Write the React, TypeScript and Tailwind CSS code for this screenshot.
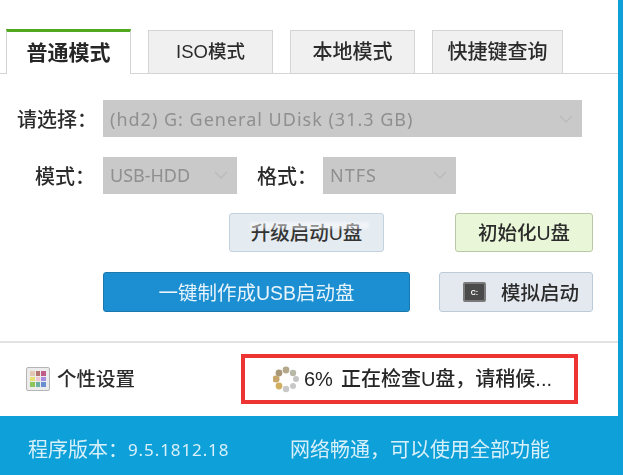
const cjk = "font-['Liberation_Sans','Noto_Sans_CJK_SC',sans-serif]";

function Chevron({ className }: { className: string }) {
  return (
    <svg width="16" height="10" viewBox="0 0 16 10" fill="none" className={className}>
      <path d="M2 2l6 6 6-6" stroke="#bababa" strokeWidth="1.3" />
    </svg>
  );
}

function Tab({ label, width, active, size = "text-[20px]" }: { label: string; width: string; active?: boolean; size?: string }) {
  if (active) {
    return (
      <div className={`${width} h-[45px] -mb-px flex items-center justify-center border-x border-[#d4d4d4] border-t-[3px] border-t-[#4fa81e] bg-white text-[21px] font-bold text-[#262626]`}>
        {label}
      </div>
    );
  }
  return (
    <div className={`${width} ${size} h-[43px] flex items-center justify-center border border-b-0 border-[#d4d4d4] bg-[#f0f0f0] font-medium text-[#2b2b2b]`}>
      {label}
    </div>
  );
}

function Select({ value, width, spacing = "" }: { value: string; width: string; spacing?: string }) {
  return (
    <div className={`${width} ${spacing} h-[37px] flex items-center justify-between pl-[7px] pr-2 bg-[#c9c9c9] font-['Noto_Sans',sans-serif] text-[18px] text-[#8f8f8f]`}>
      <span className="pt-[1px]">{value}</span>
      <Chevron className="shrink-0" />
    </div>
  );
}

function GridIcon() {
  const colors = ["#e3c6b4", "#b5766f", "#c05a88", "#e8e070", "#f0c8d0", "#a78be0", "#8cc65a", "#6bb0a0", "#6a8fd0"];
  return (
    <div className="w-6 h-6 grid grid-cols-3 gap-px p-[3px] rounded-[2px] border border-[#b5b5b5] bg-[#ececec]">
      {colors.map((c, i) => (
        <span key={i} style={{ backgroundColor: c }} />
      ))}
    </div>
  );
}

function Spinner() {
  const dots = [
    [13, 4, "#b3a98a", 3.4], [20, 7, "#b8b8a8", 3.2], [23, 13, "#c4c4c4", 3], [20, 20, "#c8c8c8", 3],
    [13, 23, "#c8c8c8", 3.2], [6, 20, "#d0b060", 3.4], [3, 13, "#c8a868", 3.6], [6, 7, "#a89878", 3.4],
  ] as const;
  return (
    <svg width="26" height="27" viewBox="0 0 26 27" className="shrink-0">
      {dots.map(([x, y, c, r], i) => (
        <circle key={i} cx={x} cy={y} r={r} fill={c} />
      ))}
    </svg>
  );
}

function CmdIcon() {
  return (
    <div className="w-[23px] h-[20px] flex items-center justify-center rounded-[2px] bg-[#4a4a4a] border-2 border-[#7a7a7a]">
      <span className="text-[7px] leading-none font-bold text-white">C:</span>
    </div>
  );
}

export default function App() {
  return (
    <div className={`${cjk} w-[628px] h-[475px] bg-white overflow-hidden`}>
      <div className="w-[623px] h-[475px] flex flex-col border-r-[5px] border-[#0ea0d8] blur-[0.6px]">
        <div className="pt-[29px] pl-[6px] flex items-end gap-[17px] border-b border-[#d4d4d4] h-[74px]">
          <Tab label="普通模式" width="w-[125px]" active />
          <Tab label="ISO模式" width="w-[125px]" size="text-[18.5px]" />
          <Tab label="本地模式" width="w-[125px]" />
          <Tab label="快捷键查询" width="w-[131px]" />
        </div>

        <div className="flex items-center mt-[26px] h-[37px]">
          <span className="w-[103px] pl-[17px] pt-[3px] text-[20px] font-medium text-[#2b2b2b]">请选择：</span>
          <Select value="(hd2) G: General UDisk (31.3 GB)" width="w-[479px]" spacing="tracking-[1px]" />
        </div>

        <div className="flex items-center mt-[20px] h-[36px]">
          <span className="w-[103px] pl-[35px] pt-[3px] text-[20px] font-medium text-[#2b2b2b]">模式：</span>
          <Select value="USB-HDD" width="w-[134px]" />
          <span className="w-[86px] pl-[20px] pt-[3px] text-[20px] font-medium text-[#2b2b2b]">格式：</span>
          <Select value="NTFS" width="w-[133px]" spacing="tracking-[1px]" />
        </div>

        <div className="flex mt-[20px] h-[39px] pl-[229px]">
          <div className="relative w-[155px] flex items-center justify-center pt-[3px] rounded-[3px] border border-[#c3d2de] bg-[#e4ebf1] text-[19.5px] font-medium text-[#333]">
            升级启动U盘
            <div aria-hidden="true" className="absolute left-[20px] right-[14px] top-[8px] h-[7px] bg-white/45 blur-[1px]" />
          </div>
          <div className="ml-[71px] w-[138px] flex items-center justify-center pt-[3px] rounded-[3px] border border-[#b6c9a4] bg-[#e9f6d8] text-[19.5px] font-medium text-[#2b2b2b]">
            初始化U盘
          </div>
        </div>

        <div className="flex mt-[20px] h-[40px] pl-[103px]">
          <div className="w-[307px] flex items-center justify-center pt-[3px] rounded-[3px] border border-[#1a78ad] bg-[#1b8fd2] text-[19.5px] text-[#e8f4fb]">
            一键制作成USB启动盘
          </div>
          <div className="ml-[29px] w-[154px] flex items-center pl-[23px] gap-[15px] rounded-[3px] border border-[#bccbd9] bg-[#e3e9ef] text-[19.5px] font-medium text-[#2b2b2b]">
            <CmdIcon />
            <span className="pt-[3px]">模拟启动</span>
          </div>
        </div>

        <div className="mt-[29px] border-t-2 border-[#e2e2e2] h-[75px] pt-[11px] flex">
          <div className="w-[241px] pl-[26px] flex items-center gap-[7px] h-[50px] text-[19.5px] font-medium text-[#2b2b2b]">
            <GridIcon />
            <span className="pt-[2px]">个性设置</span>
          </div>
          <div className="w-[337px] h-[50px] pl-[28px] flex items-center gap-[5px] border-4 border-[#ee3333] text-[20px] font-medium text-[#262626]">
            <Spinner />
            <span className="mr-[3px]">6%</span>
            <span>正在检查U盘，请稍候...</span>
          </div>
        </div>

        <div className="flex-1 flex items-center pl-[28px] pt-[8px] bg-[#0ea0d8] text-[20px] text-[#d8f0fa]">
          <span className="w-[262px] flex items-center">
            程序版本：
            <span className="font-['Noto_Sans',sans-serif] text-[17px] tracking-[0.9px]">9.5.1812.18</span>
          </span>
          <span>网络畅通，可以使用全部功能</span>
        </div>
      </div>
    </div>
  );
}
